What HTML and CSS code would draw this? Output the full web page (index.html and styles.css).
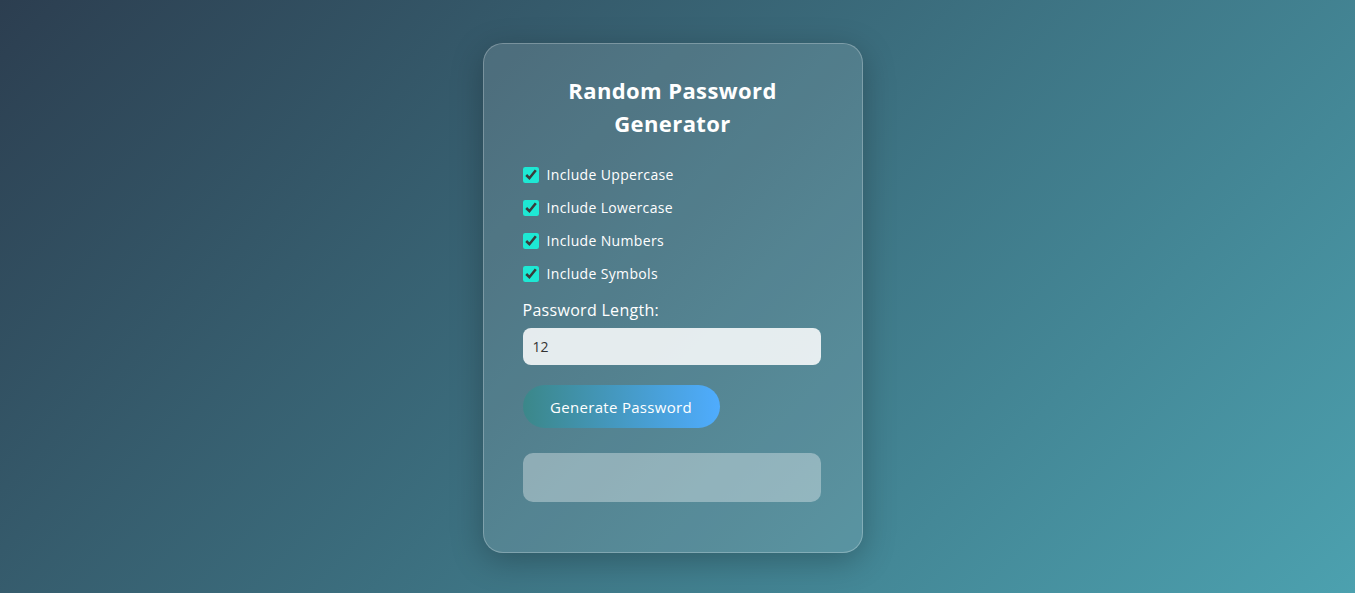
FILE: index.html
```html
<!DOCTYPE html>
<html lang="en">
<head>
<meta charset="utf-8">
<title>Random Password Generator</title>
<link rel="stylesheet" href="styles.css">
</head>
<body>
  <main class="card">
    <h1 class="title">Random Password Generator</h1>
    <div class="options">
      <label class="option"><input type="checkbox" checked> Include Uppercase</label>
      <label class="option"><input type="checkbox" checked> Include Lowercase</label>
      <label class="option"><input type="checkbox" checked> Include Numbers</label>
      <label class="option"><input type="checkbox" checked> Include Symbols</label>
    </div>
    <label class="length-label" for="len">Password Length:</label>
    <input class="length-input" id="len" type="text" value="12">
    <button class="generate">Generate Password</button>
    <div class="output"></div>
  </main>
</body>
</html>
```

FILE: styles.css
```css
* { box-sizing: border-box; }
html, body { height: 100%; }
body {
  margin: 0;
  padding-right: 10px;
  font-family: "Open Sans", "Liberation Sans", sans-serif;
  background: linear-gradient(135deg, #2c3e50 0%, #4ca1af 100%);
  display: flex;
  justify-content: center;
  align-items: flex-start;
  color: #fff;
}
.card {
  margin-top: 43px;
  width: 380px;
  height: 510px;
  padding: 30px 39px 40px;
  border: 1px solid rgba(255,255,255,0.25);
  border-radius: 20px;
  background: rgba(255,255,255,0.12);
  box-shadow: 0 8px 32px rgba(0,0,0,0.25);
  display: flex;
  flex-direction: column;
}
.title {
  margin: 0 0 25px;
  text-align: center;
  font-size: 22px;
  line-height: 33px;
  font-weight: 700;
  letter-spacing: 0.4px;
  padding: 0 20px;
}
.options {
  display: flex;
  flex-direction: column;
  gap: 13px;
}
.option {
  display: flex;
  align-items: center;
  gap: 8px;
  font-size: 14px;
  line-height: 20px;
  font-weight: 500;
  letter-spacing: 0.35px;
}
.option input {
  margin: 0;
  width: 16px;
  height: 16px;
  accent-color: #1ee8d4;
}
.length-label {
  margin-top: 14px;
  font-size: 16px;
  line-height: 24px;
  letter-spacing: 0.3px;
}
.length-input {
  margin-top: 6px;
  width: 298px;
  height: 37px;
  border: none;
  border-radius: 8px;
  background: rgba(255,255,255,0.85);
  padding: 0 10px;
  font-family: inherit;
  font-size: 14px;
  color: #333;
  outline: none;
}
.generate {
  margin-top: 20px;
  width: 197px;
  height: 43px;
  border: none;
  border-radius: 22px;
  background: linear-gradient(90deg, #3b8789 0%, #4facfe 100%);
  color: #fff;
  font-family: inherit;
  font-size: 15px;
  letter-spacing: 0.3px;
}
.output {
  margin-top: 25px;
  width: 298px;
  height: 49px;
  border-radius: 10px;
  background: rgba(255,255,255,0.35);
}
```
